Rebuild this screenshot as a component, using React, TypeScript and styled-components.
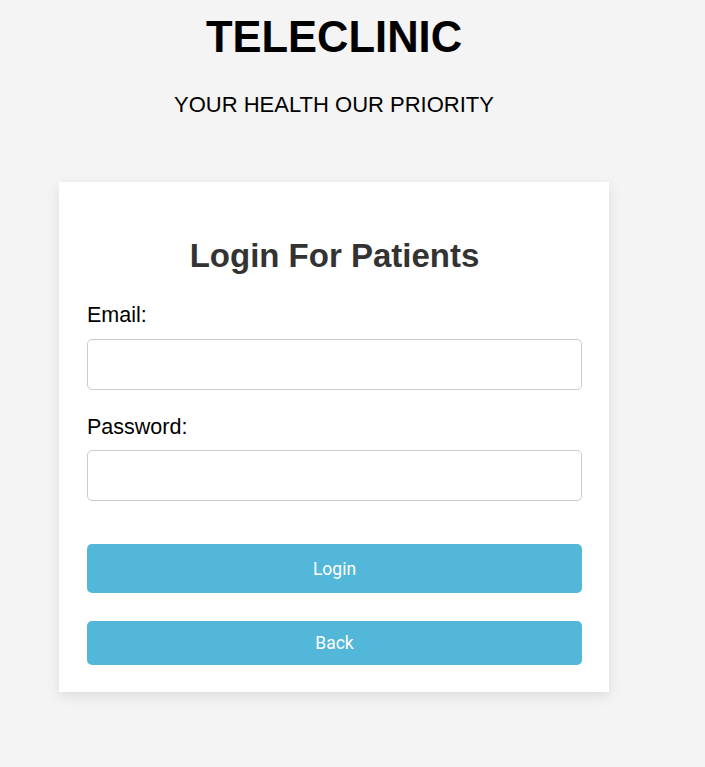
import * as React from 'react';
import styled, { createGlobalStyle } from 'styled-components';

const ACCENT = '#52b7d9';

const GlobalStyle = createGlobalStyle`
  html, body {
    margin: 0;
    padding: 0;
    background-color: #f4f4f4;
  }

  body {
    font-family: 'Liberation Sans', Arial, sans-serif;
  }
`;

const Page = styled.div`
  width: 668px;
  display: flex;
  flex-direction: column;
  align-items: center;
  padding-bottom: 60px;
`;

const Title = styled.h1`
  margin: 15px 0 0;
  font-size: 43.5px;
  line-height: 44px;
  font-weight: 700;
  color: #000;
`;

const Tagline = styled.p`
  margin: 35px 0 0;
  font-size: 22px;
  line-height: 22px;
  color: #000;
`;

const Card = styled.form`
  box-sizing: border-box;
  width: 550px;
  margin-top: 66px;
  padding: 57px 27px 27px 28px;
  background-color: #fff;
  box-shadow: 0 4px 12px rgba(0, 0, 0, 0.1);
  display: flex;
  flex-direction: column;
`;

const Heading = styled.h2`
  margin: 0 0 33px;
  font-size: 33px;
  line-height: 33px;
  font-weight: 700;
  text-align: center;
  color: #333;
`;

const Field = styled.label<{ $spaced?: boolean }>`
  display: flex;
  flex-direction: column;
  gap: 12px;
  margin-top: ${({ $spaced }) => ($spaced ? '27px' : '0')};
  font-size: 21.5px;
  line-height: 21.5px;
  color: #000;
`;

const Input = styled.input`
  box-sizing: border-box;
  width: 100%;
  height: 51px;
  padding: 0 12px;
  border: 1px solid #ccc;
  border-radius: 5px;
  background-color: #fff;
  font-size: 18px;
  font-family: inherit;
  outline: none;
`;

const Button = styled.button<{ $height: number; $gap: number }>`
  box-sizing: border-box;
  width: 100%;
  height: ${({ $height }) => $height}px;
  margin-top: ${({ $gap }) => $gap}px;
  border: none;
  border-radius: 5px;
  background-color: ${ACCENT};
  color: #fff;
  font-family: Roboto, 'Liberation Sans', Arial, sans-serif;
  font-size: 17.5px;
  cursor: pointer;
`;

const App: React.FunctionComponent = () => {
  return (
    <>
      <GlobalStyle />
      <Page>
        <Title>TELECLINIC</Title>
        <Tagline>YOUR HEALTH OUR PRIORITY</Tagline>
        <Card onSubmit={(e) => e.preventDefault()}>
          <Heading>Login For Patients</Heading>
          <Field>
            Email:
            <Input type="email" />
          </Field>
          <Field $spaced>
            Password:
            <Input type="password" />
          </Field>
          <Button type="submit" $height={49} $gap={43}>
            Login
          </Button>
          <Button type="button" $height={44} $gap={28}>
            Back
          </Button>
        </Card>
      </Page>
    </>
  );
};

export default App;
